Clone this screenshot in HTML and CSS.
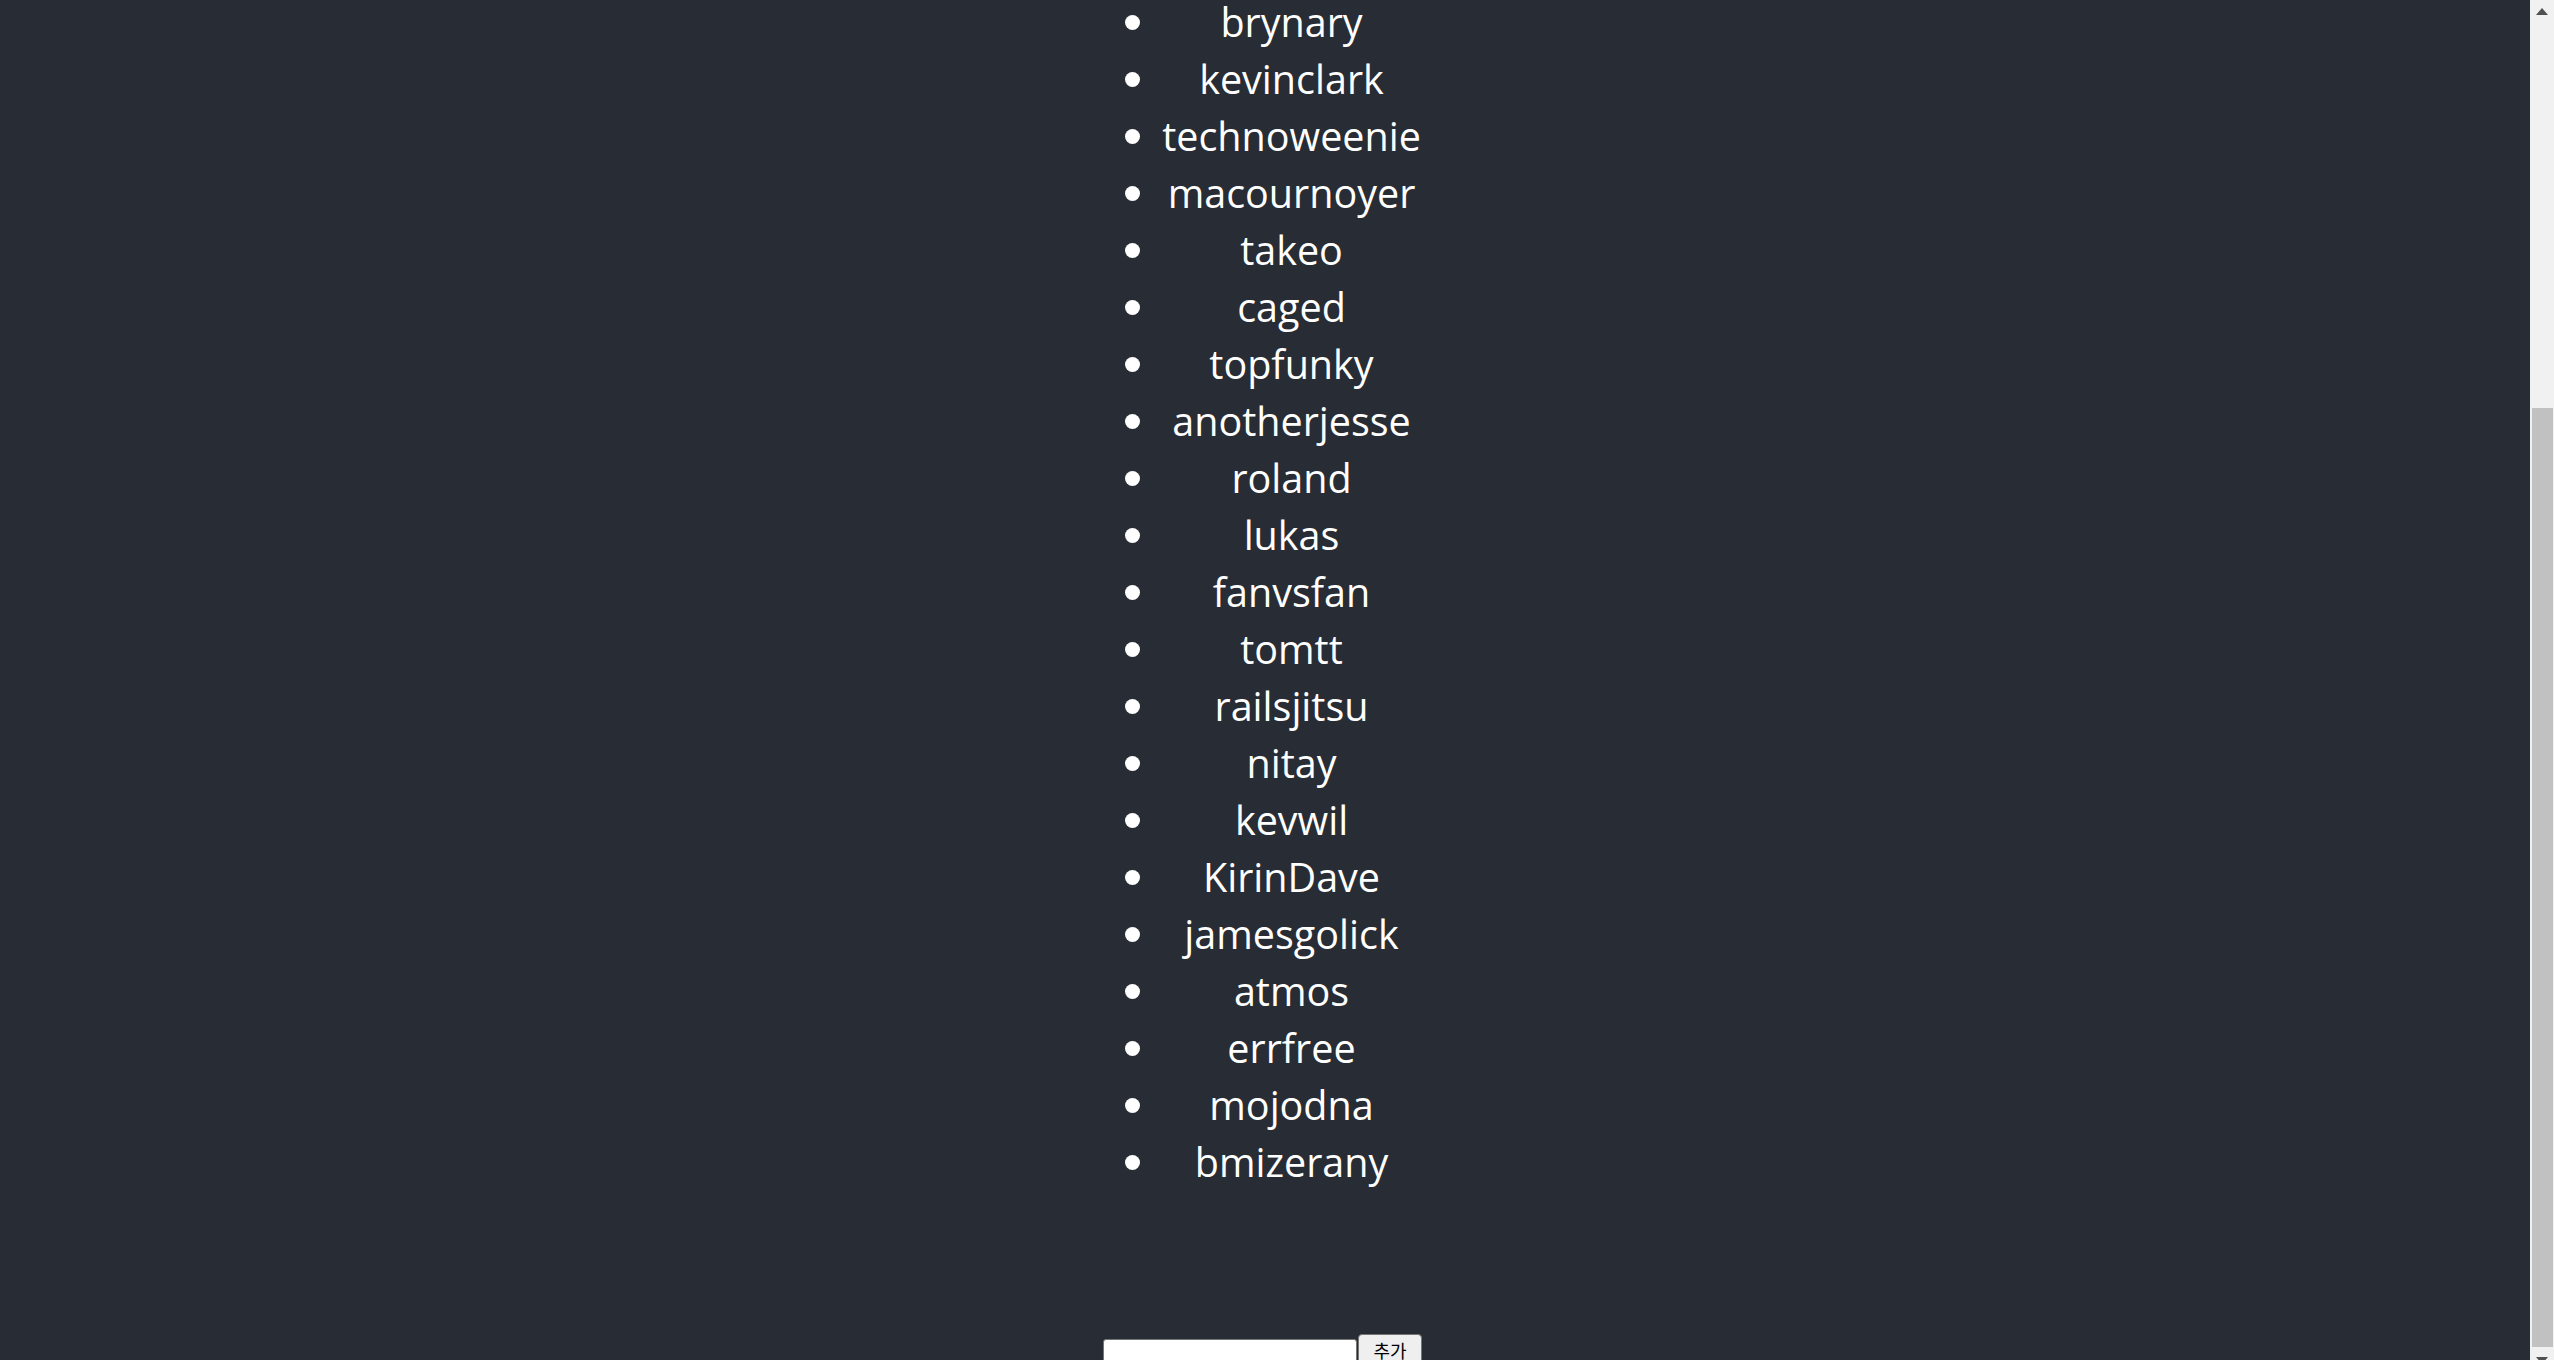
FILE: index.html
```html
<!DOCTYPE html>
<html lang="ko">
<head>
<meta charset="utf-8">
<title>Users</title>
<link rel="stylesheet" href="styles.css">
</head>
<body>
<div class="frame">
  <main class="viewport">
    <div class="app">
      <ul class="users">
        <li>brynary</li>
        <li>kevinclark</li>
        <li>technoweenie</li>
        <li>macournoyer</li>
        <li>takeo</li>
        <li>caged</li>
        <li>topfunky</li>
        <li>anotherjesse</li>
        <li>roland</li>
        <li>lukas</li>
        <li>fanvsfan</li>
        <li>tomtt</li>
        <li>railsjitsu</li>
        <li>nitay</li>
        <li>kevwil</li>
        <li>KirinDave</li>
        <li>jamesgolick</li>
        <li>atmos</li>
        <li>errfree</li>
        <li>mojodna</li>
        <li>bmizerany</li>
      </ul>
      <form class="add-form"><input type="text" class="add-input"><button type="button" class="add-btn">추가</button></form>
    </div>
  </main>
  <div class="scrollbar">
    <div class="sb-btn"><span class="tri tri-up"></span></div>
    <div class="sb-track"><div class="sb-thumb" style="height:939px"></div></div>
    <div class="sb-btn"><span class="tri tri-down"></span></div>
  </div>
</div>
</body>
</html>
```

FILE: styles.css
```css
html, body {
  margin: 0;
  padding: 0;
  height: 100%;
  overflow: hidden;
  background: #282c34;
}

.frame {
  display: flex;
  height: calc(100vh + 11px);
}

.viewport {
  flex: 1;
  min-width: 0;
  overflow: hidden;
  display: flex;
  flex-direction: column;
  justify-content: flex-end;
  align-items: center;
}

.app {
  display: flex;
  flex-direction: column;
  align-items: center;
  color: #ffffff;
  font-family: "Open Sans", "Noto Sans", sans-serif;
}

.users {
  margin: 0 0 144px 0;
  padding: 0 0 0 53px;
  font-size: 39.5px;
  line-height: 55px;
  text-align: center;
}

.users li::marker {
  font-size: 43px;
}

.add-form {
  display: flex;
  align-items: flex-end;
  margin: 0 5px 4px 0;
}

.add-input {
  box-sizing: border-box;
  width: 254px;
  height: 28px;
  margin: 0 1px 0 0;
  padding: 1px 3px;
  border: 1px solid #767676;
  border-radius: 3px;
  background: #ffffff;
  font-size: 18px;
}

.add-btn {
  box-sizing: border-box;
  width: 64px;
  height: 33px;
  margin: 0;
  padding: 0 8px;
  border: 1px solid #767676;
  border-radius: 4px;
  background: #efefef;
  color: #000000;
  font-family: "Noto Sans CJK KR", sans-serif;
  font-size: 18px;
  line-height: 31px;
}

.scrollbar {
  width: 24px;
  flex: none;
  display: flex;
  flex-direction: column;
  background: #f1f1f1;
}

.sb-btn {
  height: 22px;
  flex: none;
  display: flex;
  align-items: center;
  justify-content: center;
}

.tri {
  width: 0;
  height: 0;
  border-left: 6px solid transparent;
  border-right: 6px solid transparent;
}

.tri-up {
  border-bottom: 7px solid #505050;
}

.tri-down {
  border-top: 7px solid #505050;
}

.sb-track {
  flex: 1;
  display: flex;
  flex-direction: column;
  justify-content: flex-end;
  padding: 0 1px 2px 2px;
}

.sb-thumb {
  background: #c1c1c1;
}
```
